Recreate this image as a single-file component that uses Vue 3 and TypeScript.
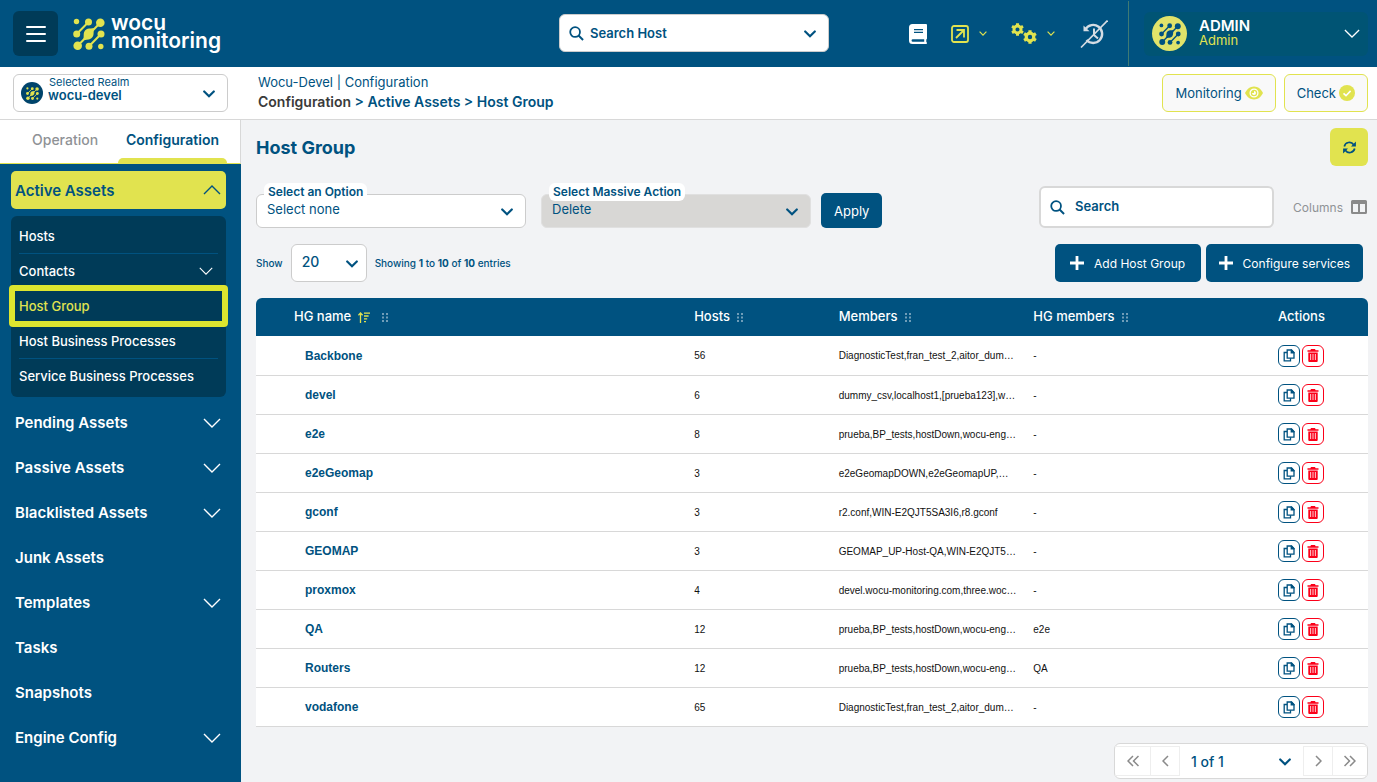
<script setup lang="ts">
import { ref } from 'vue'

interface HostGroup {
  name: string
  hosts: number
  members: string
  hgMembers: string
}

interface NavItem {
  label: string
  expandable: boolean
}

const columns: string[] = ['Hosts', 'Members', 'HG members']

const groups: HostGroup[] = [
  { name: 'Backbone', hosts: 56, members: 'DiagnosticTest,fran_test_2,aitor_dum…', hgMembers: '-' },
  { name: 'devel', hosts: 6, members: 'dummy_csv,localhost1,[prueba123],w…', hgMembers: '-' },
  { name: 'e2e', hosts: 8, members: 'prueba,BP_tests,hostDown,wocu-eng…', hgMembers: '-' },
  { name: 'e2eGeomap', hosts: 3, members: 'e2eGeomapDOWN,e2eGeomapUP,…', hgMembers: '-' },
  { name: 'gconf', hosts: 3, members: 'r2.conf,WIN-E2QJT5SA3I6,r8.gconf', hgMembers: '-' },
  { name: 'GEOMAP', hosts: 3, members: 'GEOMAP_UP-Host-QA,WIN-E2QJT5…', hgMembers: '-' },
  { name: 'proxmox', hosts: 4, members: 'devel.wocu-monitoring.com,three.woc…', hgMembers: '-' },
  { name: 'QA', hosts: 12, members: 'prueba,BP_tests,hostDown,wocu-eng…', hgMembers: 'e2e' },
  { name: 'Routers', hosts: 12, members: 'prueba,BP_tests,hostDown,wocu-eng…', hgMembers: 'QA' },
  { name: 'vodafone', hosts: 65, members: 'DiagnosticTest,fran_test_2,aitor_dum…', hgMembers: '-' },
]

const subItems = [
  { label: 'Hosts', expandable: false, line: true },
  { label: 'Contacts', expandable: true, line: false },
  { label: 'Host Group', expandable: false, line: false },
  { label: 'Host Business Processes', expandable: false, line: true },
  { label: 'Service Business Processes', expandable: false, line: false },
]

const navItems: NavItem[] = [
  { label: 'Pending Assets', expandable: true },
  { label: 'Passive Assets', expandable: true },
  { label: 'Blacklisted Assets', expandable: true },
  { label: 'Junk Assets', expandable: false },
  { label: 'Templates', expandable: true },
  { label: 'Tasks', expandable: false },
  { label: 'Snapshots', expandable: false },
  { label: 'Engine Config', expandable: true },
]

const activeItem = ref('Host Group')
const search = ref('')
</script>

<template>
  <div class="page">
    <svg class="defs" aria-hidden="true">
      <symbol id="i-net" viewBox="0 0 32 32">
        <g fill="currentColor">
          <circle cx="3.5" cy="3.5" r="2.7" />
          <circle cx="15.5" cy="4" r="3.5" />
          <circle cx="27.3" cy="4.700" r="4.300" />
          <circle cx="3.7" cy="16" r="3.5" />
          <circle cx="28" cy="16" r="3.5" />
          <circle cx="4.700" cy="27.700" r="4.300" />
          <circle cx="16" cy="28.300" r="3.5" />
          <circle cx="27.8" cy="28.5" r="2.7" />
          <path d="M10.700 17c0-4 2.300-6 5.300-6.400 2.500-.2 5-.6 5-.6s-.4 3-.4 5c0 4-2.300 6-5 6.400-2.500.2-5.200.6-5.200.6s.3-3 .3-5z" />
        </g>
        <path d="M15.500 4L3.700 16M27.300 4.700L4.700 27.700M28 16L16 28.300" stroke="currentColor" stroke-width="2" fill="none" />
      </symbol>
      <symbol id="i-thick" viewBox="0 0 12 8">
        <path d="M1.200 1.500L6 6.200l4.800-4.700" fill="none" stroke="currentColor" stroke-width="2.200" stroke-linecap="round" />
      </symbol>
      <symbol id="i-thin" viewBox="0 0 18 10">
        <path d="M1 1l8 8 8-8" fill="none" stroke="currentColor" stroke-width="1.400" />
      </symbol>
      <symbol id="i-mini" viewBox="0 0 8 5">
        <path d="M.6.700L4 4.100 7.400.700" fill="none" stroke="currentColor" stroke-width="1.200" />
      </symbol>
      <symbol id="i-search" viewBox="0 0 16 16">
        <circle cx="6.500" cy="6.500" r="5.200" fill="none" stroke="currentColor" stroke-width="1.900" />
        <path d="M10.200 10.200l4.800 4.800" stroke="currentColor" stroke-width="2.100" />
      </symbol>
      <symbol id="i-grip" viewBox="0 0 7 10">
        <path d="M0 0h2v2H0zM4 0h2v2H4zM0 3.500h2v2H0zM4 3.500h2v2H4zM0 7h2v2H0zM4 7h2v2H4z" fill="currentColor" />
      </symbol>
      <symbol id="i-plus" viewBox="0 0 14 14">
        <path d="M7 0v14M0 7h14" stroke="currentColor" stroke-width="2.800" />
      </symbol>
      <symbol id="i-copy" viewBox="0 0 12 13">
        <path d="M4.200 1h4.300L11 3.500v5.700H4.200z" fill="none" stroke="currentColor" stroke-width="1.300" />
        <path d="M7.600 .6h1.200l2.600 2.600v1.300H7.600z" fill="currentColor" />
        <path d="M4.200 3.500H1.200v8.300h6.300V9.200" fill="none" stroke="currentColor" stroke-width="1.300" />
      </symbol>
      <symbol id="i-trash" viewBox="0 0 12 13">
        <path d="M4 0h4l.6 1.200H11.500v1.600H.5V1.200h2.900z" fill="currentColor" />
        <path fill-rule="evenodd" d="M1.300 3.600h9.400V12a1 1 0 0 1-1 1H2.300a1 1 0 0 1-1-1zM3.300 5v6h.8V5zM5.600 5v6h.8V5zM7.900 5v6h.8V5z" fill="currentColor" />
      </symbol>
      <symbol id="i-gear" viewBox="0 0 14 14">
        <circle cx="7" cy="7" r="3.800" fill="none" stroke="currentColor" stroke-width="3.200" />
        <path d="M7 .2v3M7 10.800v3M1.100 3.600l2.500 1.500M10.400 8.900l2.500 1.500M1.100 10.400l2.500-1.500M10.400 5.100l2.500-1.500" stroke="currentColor" stroke-width="3.200" />
      </symbol>
    </svg>

    <header class="topbar">
      <div class="brand">
        <button class="burger" type="button" aria-label="Toggle menu">
          <svg width="20" height="18" viewBox="0 0 20 18"><path d="M1 2h18M1 9h18M1 16h18" stroke="#fff" stroke-width="2" stroke-linecap="round" /></svg>
        </button>
        <a class="logo" href="#">
          <svg class="logo-mark" width="32" height="32"><use href="#i-net" /></svg>
          <span class="logo-text"><span>wocu</span><span>monitoring</span></span>
        </a>
      </div>

      <div class="field host-search">
        <svg class="lead" width="15" height="15"><use href="#i-search" /></svg>
        <select aria-label="Search Host"><option>Search Host</option></select>
        <svg class="caret" width="12" height="8"><use href="#i-thick" /></svg>
      </div>

      <div class="tools">
        <div class="tool-icons">
          <button class="tool" type="button" aria-label="Documentation">
            <svg width="18" height="20" viewBox="0 0 18 20">
              <path fill-rule="evenodd" d="M3.500 0H17a1 1 0 0 1 1 1v13.500a1 1 0 0 1-.7.900v2.600c.5.200.7.500.7 1s-.400 1-1 1H3.500A3.500 3.500 0 0 1 0 16.500v-13A3.500 3.500 0 0 1 3.500 0zM5 5v1.200h9V5zm0 2.700v1.200h9V7.700zM3.800 15.300a1.200 1.200 0 0 0 0 2.500h11.400v-2.500z" fill="#fff" />
            </svg>
          </button>
          <button class="tool lime open" type="button" aria-label="Shortcuts">
            <svg width="18" height="18" viewBox="0 0 18 18" fill="none" stroke="currentColor">
              <rect x="1" y="1" width="16" height="16" rx="2" stroke-width="1.800" />
              <path d="M5 13l7.500-7.500M5.500 5h7.500v7.500" stroke-width="1.800" />
            </svg>
            <svg class="mini" width="8" height="5"><use href="#i-mini" /></svg>
          </button>
          <button class="tool lime gears" type="button" aria-label="Settings">
            <svg width="26" height="21" viewBox="0 0 26 21">
              <use href="#i-gear" x="0" y="0" width="13" height="13" />
              <use href="#i-gear" x="12" y="7" width="14" height="14" />
            </svg>
            <svg class="mini" width="8" height="5"><use href="#i-mini" /></svg>
          </button>
          <button class="tool history" type="button" aria-label="History off">
            <svg width="28" height="28" viewBox="0 0 28 28" fill="none" stroke="#d5dce3">
              <path d="M5.500 9.200A9 9 0 1 1 6.500 20" stroke-width="2.400" />
              <path d="M3.500 5.500v5.800h6z" fill="#d5dce3" stroke="none" />
              <path d="M14 8.500v6.500l4 3.500" stroke-width="2" />
              <path d="M1 27.500L27.500.5" stroke-width="1.600" />
            </svg>
          </button>
        </div>
        <div class="user-wrap">
          <button class="user" type="button">
            <span class="avatar"><svg width="22" height="22"><use href="#i-net" /></svg></span>
            <span class="user-text"><strong>ADMIN</strong><span>Admin</span></span>
            <svg class="user-caret" width="16" height="9"><use href="#i-thin" /></svg>
          </button>
        </div>
      </div>
    </header>

    <div class="subbar">
      <div class="field realm">
        <span class="realm-icon"><svg width="13" height="13"><use href="#i-net" /></svg></span>
        <label for="realm">Selected Realm</label>
        <select id="realm"><option>wocu-devel</option></select>
        <svg class="caret" width="12" height="8"><use href="#i-thick" /></svg>
      </div>
      <div class="crumbs">
        <div>Wocu-Devel | Configuration</div>
        <nav aria-label="Breadcrumb"><span class="dark">Configuration</span> &gt; <a href="#">Active Assets</a> &gt; <a href="#">Host Group</a></nav>
      </div>
      <button class="outline" type="button">Monitoring
        <svg width="18" height="14" viewBox="0 0 18 14"><path d="M0 7c1.800-3.700 5-6.500 9-6.500S16.200 3.300 18 7c-1.800 3.700-5 6.500-9 6.500S1.800 10.700 0 7z" fill="#e1e34f" /><circle cx="9" cy="7" r="3.900" fill="none" stroke="#fff" stroke-width="1.300" /><path d="M9 5a2 2 0 1 1-2 2h2z" fill="#fff" /></svg>
      </button>
      <button class="outline" type="button">Check
        <svg width="16" height="16" viewBox="0 0 16 16"><circle cx="8" cy="8" r="8" fill="#e1e34f" /><path d="M4.500 8.300l2.500 2.400 4.600-4.800" fill="none" stroke="#fff" stroke-width="1.600" /></svg>
      </button>
    </div>

    <div class="body">
      <aside class="sidebar">
        <div class="tabs">
          <button class="tab" type="button">Operation</button>
          <button class="tab current" type="button">Configuration</button>
        </div>
        <nav class="nav" aria-label="Main">
          <button class="nav-head" type="button">Active Assets <svg width="18" height="10" class="up"><use href="#i-thin" /></svg></button>
          <ul class="submenu">
            <li v-for="s in subItems" :key="s.label" :class="{ line: s.line, active: s.label === activeItem }">
              <a href="#" @click.prevent="activeItem = s.label">{{ s.label }}</a>
              <svg v-if="s.expandable" width="14" height="8"><use href="#i-thin" /></svg>
            </li>
          </ul>
          <ul class="items">
            <li v-for="n in navItems" :key="n.label">
              <a href="#" @click.prevent>{{ n.label }}</a>
              <svg v-if="n.expandable" width="18" height="10"><use href="#i-thin" /></svg>
            </li>
          </ul>
        </nav>
      </aside>

      <main class="content">
        <div class="title-row">
          <h1>Host Group</h1>
          <button class="refresh" type="button" aria-label="Refresh">
            <svg width="13" height="13" viewBox="0 0 13 13" fill="none" stroke="currentColor" stroke-width="1.700">
              <path d="M1.300 5.500A5.200 5.200 0 0 1 10.700 3.700M11.700 7.500A5.200 5.200 0 0 1 2.300 9.300" />
              <path d="M12.900.6v4.900H8zM.1 12.400V7.500H5z" fill="currentColor" stroke="none" />
            </svg>
          </button>
        </div>

        <div class="filters">
          <div class="field option">
            <label for="opt">Select an Option</label>
            <select id="opt"><option>Select none</option></select>
            <svg class="caret" width="12" height="8"><use href="#i-thick" /></svg>
          </div>
          <div class="field option massive">
            <label for="mass">Select Massive Action</label>
            <select id="mass"><option>Delete</option></select>
            <svg class="caret" width="12" height="8"><use href="#i-thick" /></svg>
          </div>
          <button class="primary apply" type="button">Apply</button>
          <div class="search">
            <svg width="15" height="15"><use href="#i-search" /></svg>
            <input v-model="search" type="text" placeholder="Search" aria-label="Search" />
          </div>
          <button class="columns" type="button">Columns
            <svg width="16" height="14" viewBox="0 0 16 14"><path fill-rule="evenodd" d="M1.500 0h13A1.500 1.500 0 0 1 16 1.500v11a1.500 1.500 0 0 1-1.500 1.500h-13A1.500 1.500 0 0 1 0 12.500v-11A1.500 1.500 0 0 1 1.500 0zM2 4v8h5V4zM9 4v8h5V4z" fill="#8a8a8a" /></svg>
          </button>
        </div>

        <div class="list-bar">
          <label class="small" for="len">Show</label>
          <div class="field length">
            <select id="len"><option>20</option></select>
            <svg class="caret" width="12" height="8"><use href="#i-thick" /></svg>
          </div>
          <span class="small">Showing <b>1</b> to <b>10</b> of <b>10</b> entries</span>
          <div class="actions-bar">
            <button class="primary" type="button"><svg width="14" height="14"><use href="#i-plus" /></svg>Add Host Group</button>
            <button class="primary" type="button"><svg width="14" height="14"><use href="#i-plus" /></svg>Configure services</button>
          </div>
        </div>

        <table>
          <colgroup><col class="c1" /><col class="c2" /><col class="c3" /><col class="c4" /><col class="c5" /></colgroup>
          <thead>
            <tr>
              <th class="first" scope="col">HG name
                <svg class="sort" width="12" height="11" viewBox="0 0 12 11" fill="none" stroke="#e1e34f" stroke-width="1.300"><path d="M2.500 11V1M.4 3.200L2.500 1l2.100 2.200M6 1.200h6M6 4h4.600M6 6.800h3.200M6 9.600h2" /></svg>
                <svg class="grip" width="7" height="10"><use href="#i-grip" /></svg>
              </th>
              <th v-for="c in columns" :key="c" scope="col">{{ c }}
                <svg class="grip" width="7" height="10"><use href="#i-grip" /></svg>
              </th>
              <th scope="col">Actions</th>
            </tr>
          </thead>
          <tbody>
            <tr v-for="g in groups" :key="g.name">
              <td class="name"><a href="#" @click.prevent>{{ g.name }}</a></td>
              <td>{{ g.hosts }}</td>
              <td class="members">{{ g.members }}</td>
              <td>{{ g.hgMembers }}</td>
              <td>
                <div class="row-actions">
                  <button type="button" :aria-label="'Copy ' + g.name"><svg width="12" height="13"><use href="#i-copy" /></svg></button>
                  <button class="danger" type="button" :aria-label="'Delete ' + g.name"><svg width="12" height="13"><use href="#i-trash" /></svg></button>
                </div>
              </td>
            </tr>
          </tbody>
        </table>

        <nav class="pager" aria-label="Pagination">
          <button class="wide" type="button" aria-label="First page"><svg width="12" height="12" viewBox="0 0 12 12"><path d="M6 1L1 6l5 5M11.500 1l-5 5 5 5" /></svg></button>
          <button type="button" aria-label="Previous page"><svg width="7" height="12" viewBox="0 0 7 12"><path d="M6 1L1 6l5 5" /></svg></button>
          <div class="field pages">
            <select aria-label="Page"><option>1 of 1</option></select>
            <svg class="caret" width="12" height="8"><use href="#i-thick" /></svg>
          </div>
          <button type="button" aria-label="Next page"><svg width="7" height="12" viewBox="0 0 7 12"><path d="M1 1l5 5-5 5" /></svg></button>
          <button class="wide" type="button" aria-label="Last page"><svg width="12" height="12" viewBox="0 0 12 12"><path d="M.5 1l5 5-5 5M6 1l5 5-5 5" /></svg></button>
        </nav>
      </main>
    </div>
  </div>
</template>

<style>
body {
  margin: 0;
  background: #f2f3f5;
}
</style>

<style scoped>
* {
  box-sizing: border-box;
}
.page {
  display: flex;
  flex-direction: column;
  min-height: 100vh;
  font-family: Inter, 'Liberation Sans', sans-serif;
  font-size: 13px;
  color: #005280;
}
.defs {
  position: absolute;
  width: 0;
  height: 0;
}
button,
select,
input {
  font: inherit;
  color: inherit;
  margin: 0;
}
button {
  border: 0;
  padding: 0;
  background: none;
  cursor: pointer;
  white-space: nowrap;
}
a {
  color: inherit;
  text-decoration: none;
}
ul {
  list-style: none;
  margin: 0;
  padding: 0;
}
svg {
  flex: none;
}

/* Shared select shell */
.field {
  position: relative;
  background: #fff;
  border: 1px solid #ccc;
  border-radius: 6px;
}
.field select {
  display: block;
  width: 100%;
  height: 100%;
  border: 0;
  outline: 0;
  appearance: none;
  background: none;
}
.field .caret {
  position: absolute;
  right: 12px;
  top: 50%;
  margin-top: -3px;
  pointer-events: none;
}

/* Top bar */
.topbar {
  display: grid;
  grid-template-columns: 1fr 270px 1fr;
  align-items: center;
  height: 67px;
  padding: 0 2px 0 13px;
  background: #005280;
}
.brand {
  display: flex;
  align-items: center;
  gap: 15px;
}
.burger {
  display: flex;
  align-items: center;
  justify-content: center;
  width: 45px;
  height: 45px;
  border-radius: 6px;
  background: #003b58;
}
.logo {
  display: flex;
  align-items: center;
  gap: 6px;
}
.logo-mark {
  color: #e1e34f;
}
.logo-text {
  display: flex;
  flex-direction: column;
  color: #fff;
  font-size: 21px;
  font-weight: 600;
  line-height: 18px;
  padding-bottom: 4px;
}
.host-search {
  height: 38px;
  margin-bottom: 2px;
}
.host-search .lead {
  position: absolute;
  left: 9px;
  top: 11px;
}
.host-search select {
  padding: 0 30px;
  font-size: 13px;
  font-weight: 600;
}
.tools {
  display: flex;
  justify-content: flex-end;
  align-items: center;
}
.tool-icons {
  display: flex;
  align-items: center;
  margin-right: 20px;
}
.tool {
  display: flex;
  align-items: center;
  gap: 10px;
}
.tool.open {
  margin-left: 24px;
}
.tool.gears {
  margin-left: 24px;
}
.tool.history {
  margin-left: 25px;
}
.tool.lime {
  color: #e1e34f;
}
.user-wrap {
  display: flex;
  align-items: center;
  height: 65px;
  padding: 0 7px 0 15px;
  border-left: 1px solid #3f7a74;
}
.user {
  display: flex;
  align-items: center;
  width: 224px;
  height: 44px;
  padding: 0 8px;
  border-radius: 6px;
  background: #005474;
  text-align: left;
}
.avatar,
.realm-icon {
  display: flex;
  align-items: center;
  justify-content: center;
  border-radius: 50%;
}
.avatar {
  width: 35px;
  height: 35px;
  background: #e1e36a;
  color: #005280;
}
.user-text {
  display: flex;
  flex-direction: column;
  flex: 1;
  margin-left: 12px;
  padding-bottom: 2px;
  line-height: 15px;
  color: #e1e34f;
}
.user-text strong {
  color: #fff;
  font-size: 15px;
  font-weight: 600;
}
.user-caret {
  color: #fff;
}

/* Realm and breadcrumb bar */
.subbar {
  display: flex;
  align-items: center;
  height: 53px;
  padding: 0 9px 0 13px;
  background: #fff;
  border-bottom: 1px solid #d8d8d8;
}
.realm {
  width: 215px;
  height: 38px;
  margin-right: 30px;
}
.realm-icon {
  position: absolute;
  left: 7px;
  top: 7px;
  width: 22px;
  height: 22px;
  background: #00446b;
  color: #e1e34f;
}
.realm label {
  position: absolute;
  left: 35px;
  top: 0;
  font-size: 11px;
  line-height: 14px;
}
.realm select {
  padding: 4px 30px 0 34px;
  font-weight: 600;
}
.crumbs {
  flex: 1;
  padding-bottom: 2px;
  line-height: 20px;
}
.crumbs nav {
  font-size: 14px;
  font-weight: 600;
}
.crumbs .dark {
  color: #3a3a3a;
}
.outline {
  display: flex;
  align-items: center;
  gap: 3px;
  height: 38px;
  margin-left: 8px;
  padding: 0 12px;
  border: 1px solid #e1e34f;
  border-radius: 6px;
  background: #f9f9f9;
}

/* Sidebar */
.body {
  display: flex;
  flex: 1;
}
.sidebar {
  display: flex;
  flex-direction: column;
  flex: none;
  width: 241px;
}
.tabs {
  display: flex;
  justify-content: space-between;
  height: 44px;
  padding: 0 13px 0 24px;
  background: #fff;
  border-right: 1px solid #d8d8d8;
  border-bottom: 1px solid #e1e34f;
}
.tab {
  padding: 0 8px 5px;
  color: #8f9296;
  font-size: 14px;
  font-weight: 500;
}
.tab.current {
  position: relative;
  color: #005280;
  font-weight: 600;
}
.tab.current::after {
  content: '';
  position: absolute;
  left: 0;
  right: 0;
  bottom: 0;
  height: 5px;
  border-radius: 6px 6px 0 0;
  background: #e1e34f;
}
.nav {
  flex: 1;
  padding: 7px 15px 0 11px;
  background: #005280;
  color: #fff;
}
.nav-head {
  display: flex;
  align-items: center;
  justify-content: space-between;
  width: 100%;
  height: 38px;
  padding: 0 5px 0 4px;
  border-radius: 5px;
  background: #e1e34f;
  color: #005280;
  font-size: 15px;
  font-weight: 600;
}
.up {
  transform: rotate(180deg);
}
.submenu {
  margin-top: 7px;
  padding: 3px 8px;
  border-radius: 6px;
  background: #003b58;
}
.submenu li {
  position: relative;
  display: flex;
  align-items: center;
  justify-content: space-between;
  height: 35px;
  padding-right: 5px;
  border-bottom: 1px solid transparent;
  font-weight: 500;
}
.submenu li.line {
  border-bottom-color: #005280;
}
.submenu li.active {
  color: #e1e34f;
}
.submenu li.active::after {
  content: '';
  position: absolute;
  inset: -4px -10px;
  border: 6px solid #dde52f;
  border-radius: 4px;
  pointer-events: none;
}
.items {
  padding: 3px 5px 0 4px;
}
.items li {
  display: flex;
  align-items: center;
  justify-content: space-between;
  height: 45px;
  font-size: 15px;
  font-weight: 600;
}

/* Content */
.content {
  flex: 1;
  min-width: 0;
  padding: 8px 9px 3px 15px;
}
.title-row {
  display: flex;
  align-items: center;
  justify-content: space-between;
}
h1 {
  margin: 0;
  font-size: 18px;
  font-weight: 700;
}
.refresh {
  display: flex;
  align-items: center;
  justify-content: center;
  width: 38px;
  height: 38px;
  border-radius: 6px;
  background: #e1e34f;
}
.filters {
  display: flex;
  align-items: flex-end;
  height: 42px;
  margin-top: 20px;
}
.option {
  width: 270px;
  height: 34px;
  margin-right: 15px;
}
.option label {
  position: absolute;
  left: 7px;
  top: -12px;
  padding: 0 4px;
  border-radius: 6px;
  background: #fff;
  font-size: 12px;
  font-weight: 600;
  line-height: 18px;
}
.option select {
  padding: 0 30px 4px 10px;
}
.massive {
  margin-right: 10px;
  background: #d8d7d5;
  border-color: #e0e0e0;
}
.primary {
  display: flex;
  align-items: center;
  justify-content: center;
  gap: 10px;
  height: 38px;
  padding: 0 13px;
  border-radius: 5px;
  background: #005280;
  color: #fff;
  font-size: 12px;
}
.apply {
  height: 35px;
  font-size: 13px;
}
.search {
  display: flex;
  align-items: center;
  gap: 10px;
  width: 235px;
  height: 42px;
  margin-left: auto;
  padding: 0 9px;
  border: 2px solid #d8d8d8;
  border-radius: 6px;
  background: #fff;
}
.search input {
  width: 100%;
  min-width: 0;
  border: 0;
  outline: 0;
  padding: 0 0 2px;
  font-weight: 600;
}
.search input::placeholder {
  color: #005280;
  opacity: 1;
}
.columns {
  display: flex;
  align-items: center;
  gap: 8px;
  height: 42px;
  margin: 0 1px 0 19px;
  color: #8f9296;
  font-size: 12px;
}
.list-bar {
  display: flex;
  align-items: center;
  gap: 8px;
  margin-top: 16px;
}
.small {
  font-size: 10px;
  font-weight: 500;
}
.small b {
  font-weight: 700;
}
.length {
  width: 76px;
  height: 38px;
}
.length .caret {
  right: 8px;
}
.length select {
  padding: 0 24px 4px 10px;
  font-size: 14px;
  font-weight: 500;
}
.actions-bar {
  display: flex;
  gap: 5px;
  margin-left: auto;
  margin-right: 5px;
}
.actions-bar .primary {
  min-width: 146px;
}
table {
  width: 100%;
  margin-top: 16px;
  border-collapse: separate;
  border-spacing: 0;
  table-layout: fixed;
}
.c1 { width: 38.5%; }
.c2 { width: 13%; }
.c3 { width: 17.5%; }
.c4 { width: 22%; }
.c5 { width: 9%; }
th {
  height: 38px;
  padding: 0 10px 2px;
  background: #005280;
  color: #fff;
  font-weight: 500;
  text-align: left;
  white-space: nowrap;
}
th.first {
  padding-left: 38px;
  border-top-left-radius: 6px;
}
th:last-child {
  border-top-right-radius: 6px;
}
.grip {
  margin-left: 4px;
  vertical-align: -2px;
  color: #6f9db8;
}
.sort {
  margin-left: 3px;
  vertical-align: -2px;
}
.sort + .grip {
  margin-left: 12px;
}
td {
  height: 39px;
  padding: 0 10px;
  background: #fff;
  border-bottom: 1px solid #d8d8d8;
  color: #111;
  font-family: 'Liberation Sans', Arial, sans-serif;
  font-size: 10px;
}
tbody tr:first-child td {
  height: 40px;
}
td.name {
  padding-left: 49px;
  color: #005280;
  font-size: 12px;
  font-weight: 700;
}
td.members {
  overflow: hidden;
  white-space: nowrap;
}
.row-actions {
  display: flex;
  gap: 2px;
}
.row-actions button {
  display: flex;
  align-items: center;
  justify-content: center;
  width: 22px;
  height: 22px;
  border: 1px solid #005280;
  border-radius: 6px;
  color: #005280;
}
.row-actions .danger {
  border-color: #fb0019;
  color: #fb0019;
}
.pager {
  display: flex;
  width: 254px;
  height: 36px;
  margin: 16px 0 0 auto;
  padding: 2px 0;
  border: 1px solid #d8d8d8;
  border-radius: 6px;
  background: #fff;
}
.pager button {
  display: flex;
  align-items: center;
  justify-content: center;
  width: 29px;
  border: 1px solid #eee;
  border-width: 1px 0 1px 1px;
}
.pager button.wide {
  width: 35px;
}
.pager button:first-child {
  border-left: 0;
}
.pager button path {
  fill: none;
  stroke: #8a8a8a;
  stroke-width: 1.5;
}
.pages {
  flex: 1;
  border: 0;
  border-left: 1px solid #eee;
  border-radius: 0;
}
.pages select {
  padding: 0 24px 0 11px;
  font-size: 14px;
  font-weight: 500;
}
</style>
